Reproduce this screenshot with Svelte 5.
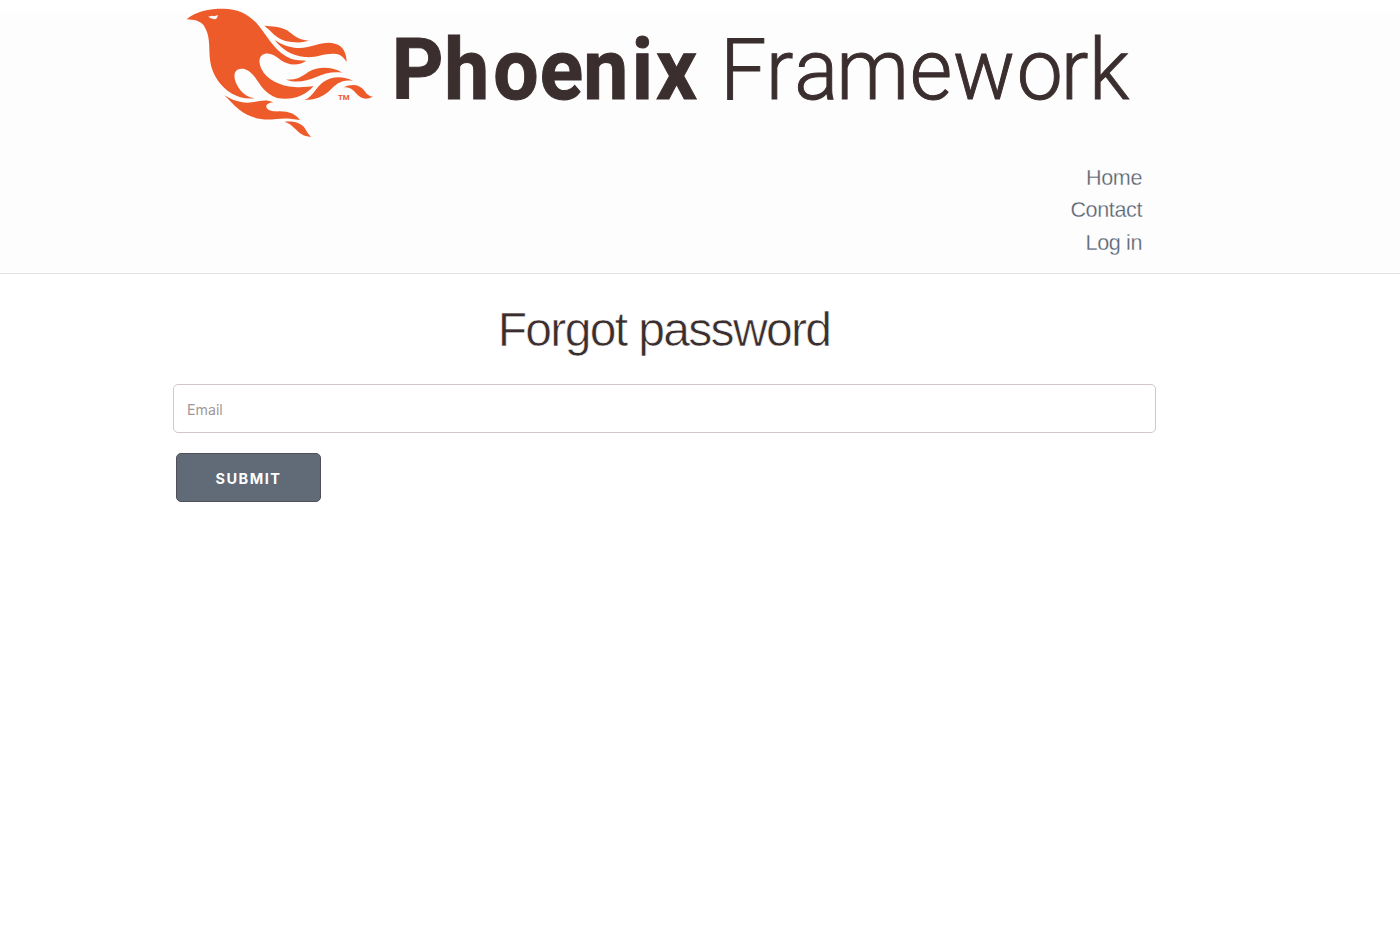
<script>
  const links = ['Home', 'Contact', 'Log in'];

  const BOLD_SCALE = 0.94;
  const LIGHT_SCALE = 0.96;

  // left edge of each letter, and the side bearing of its glyph
  const bold = [[396.5, 5], [448.5, 4.5], [495.5, 2.5], [542.5, 3], [587.5, 4.5], [636.5, 5], [656.5, 0.5]];
  const light = [[727, 7], [771.5, 6], [798.5, 4.5], [842, 6], [913.5, 4], [954, 1], [1020.5, 4], [1066.5, 6], [1094.8, 6]];

  const positions = (letters, scale) =>
    letters.map(([edge, bearing]) => (edge / scale - bearing).toFixed(2)).join(' ');
</script>

<header>
  <div class="container">
    <svg class="logo" width="982" height="145" viewBox="173 0 982 145" role="img" aria-label="Phoenix Framework">
      <g transform="translate(180 0) scale(.333333)" fill="#ee5b2b">
        <path fill-rule="evenodd" d="M20 58 C48 33 86 26 130 26 C174 26 207 43 234 74 C267 117 291 160 333 176 C348 182 365 180 379 182 C354 199 324 196 303 181 C286 166 270 158 255 161 C236 166 235 187 244 206 C260 240 302 258 344 261 C366 263 385 260 401 258 C374 290 334 301 291 294 C257 283 243 258 225 232 C207 208 189 202 172 209 C158 218 162 243 176 263 C190 284 205 291 224 295 C174 300 139 276 115 244 C99 220 91 199 89 169 C87 135 90 105 71 76 C61 62 40 59 20 58 Z M84 50 L98 47 L102 49 L114 45 C113 53 106 62 99 56 C93 56 91 53 84 50 Z"/>
        <path d="M253 77 C276 79 298 78 321 91 C342 105 356 123 387 121 C366 131 338 127 314 122 C287 114 275 94 253 77 Z"/>
        <path d="M284 120 C315 141 351 149 383 141 C411 135 438 123 465 131 C491 138 499 159 500 186 C491 171 479 161 462 161 C430 160 408 174 374 171 C334 167 305 147 284 120 Z"/>
        <path d="M318 239 C356 239 365 229 386 215 C415 198 459 200 487 218 C459 214 433 220 407 232 C377 245 347 249 318 239 Z"/>
        <path d="M373 300 C398 291 407 262 431 245 C459 227 493 229 519 243 C486 237 469 252 451 270 C429 291 403 300 373 300 Z"/>
        <path d="M491 262 C516 250 539 253 554 273 C561 284 568 289 579 290 C558 301 542 296 528 280 C518 267 508 262 491 262 Z"/>
        <path d="M133 286 C158 301 184 311 216 307 C237 305 256 296 280 307 C265 309 258 313 259 321 C263 333 282 335 300 334 C327 334 346 342 360 360 C332 355 313 354 288 357 C242 363 207 351 178 329 C159 315 148 299 133 286 Z"/>
        <path d="M314 365 C340 363 363 368 374 384 C381 396 386 405 394 410 C373 411 360 402 347 388 C335 375 327 370 314 365 Z"/>
        <text x="474" y="301" class="tm" textLength="35" lengthAdjust="spacingAndGlyphs">TM</text>
      </g>
      <text class="bold" transform="scale({BOLD_SCALE} 1)" y="99" x={positions(bold, BOLD_SCALE)}>Phoenix</text>
      <text class="light" transform="scale({LIGHT_SCALE} 1)" y="99" x={positions(light, LIGHT_SCALE)}>Framework</text>
    </svg>
    <nav>
      <ul>
        {#each links as link}
          <li><a href="#top">{link}</a></li>
        {/each}
      </ul>
    </nav>
  </div>
</header>

<main class="container">
  <h1>Forgot password</h1>
  <form onsubmit={(e) => e.preventDefault()}>
    <input type="email" placeholder="Email" aria-label="Email" />
    <button type="submit">Submit</button>
  </form>
</main>

<style>
  :global(body) { margin: 0; background: #fff; }
  .container { width: 982px; margin-left: 173px; }
  header {
    box-sizing: border-box;
    height: 274px;
    border-bottom: 1px solid #e5e3e4;
    background: linear-gradient(#fff 13px, #fdfdfd 13px);
  }
  .logo { display: block; }
  .bold, .light { font-family: Roboto, sans-serif; font-size: 85.5px; fill: #3b2e2f; stroke: #3b2e2f; stroke-width: 1px; }
  .bold { font-weight: 700; }
  .light { font-weight: 300; }
  .tm { font: 700 21px Roboto, sans-serif; }
  nav { padding: 17px 13px 0 0; }
  ul { list-style: none; margin: 0; padding: 0; text-align: right; }
  li { height: 32.4px; line-height: 32.4px; }
  a {
    color: #56616f;
    text-decoration: none;
    font: 300 21.6px/32.4px "Liberation Sans", sans-serif;
    letter-spacing: -.4px;
    -webkit-text-stroke: .3px #fdfdfd;
  }
  h1 {
    margin: 26px 0 0;
    height: 84px;
    text-align: center;
    font: 400 48px/60px "Liberation Sans", sans-serif;
    letter-spacing: -1.65px;
    color: #3b2e2f;
    -webkit-text-stroke: .6px #fff;
  }
  form { display: flex; flex-direction: column; align-items: flex-start; gap: 20px; }
  input {
    box-sizing: border-box;
    width: 983px;
    height: 49px;
    padding: 1px 13px 0;
    border: 1px solid #d3c5cb;
    border-radius: 5px;
    background: #fff;
    font: 400 14.2px Inter, sans-serif;
    outline: none;
  }
  input::placeholder { color: #9f9799; }
  button {
    box-sizing: border-box;
    width: 145px;
    height: 49px;
    margin-left: 3px;
    padding: 1px 0 0;
    border: 1px solid #514f59;
    border-radius: 5px;
    background: #606b77;
    color: #fff;
    font: 700 14.5px Inter, sans-serif;
    letter-spacing: 1.5px;
    text-transform: uppercase;
  }
</style>
